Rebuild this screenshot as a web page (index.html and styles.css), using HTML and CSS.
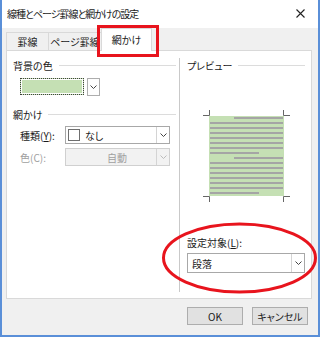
FILE: index.html
```html
<!DOCTYPE html>
<html lang="ja">
<head>
    <meta charset="UTF-8">
    <title>線種とページ罫線と網かけの設定</title>
    <link rel="stylesheet" href="styles.css">
</head>
<body>
    <div class="window">
        <div class="titlebar">
            <span class="title">線種とページ罫線と網かけの設定</span>
            <svg class="close" width="9" height="9" viewBox="0 0 9 9">
                <path d="M0.5 0.5 L8.5 8.5 M8.5 0.5 L0.5 8.5" stroke="#222" stroke-width="1.1" fill="none"/>
            </svg>
        </div>
        <div class="tabs">
            <div class="tab tab-1">罫線</div>
            <div class="tab tab-2">ページ罫線</div>
            <div class="tab tab-3 active">網かけ</div>
        </div>
        <div class="panel">
            <div class="col-left">
                <div class="group-label"><span>背景の色</span><span class="rule"></span></div>
                <div class="color-combo">
                    <span class="swatch"></span>
                    <span class="arrow-btn">
                        <svg width="7" height="4" viewBox="0 0 7 4"><path d="M0.5 0.5 L3.5 3.5 L6.5 0.5" stroke="#444" fill="none"/></svg>
                    </span>
                </div>
                <div class="group-label gap"><span>網かけ</span><span class="rule"></span></div>
                <div class="field-row">
                    <span class="field-label">種類(<u>Y</u>):</span>
                    <div class="combo">
                        <span class="check"></span>
                        <span class="combo-text">なし</span>
                        <span class="combo-arrow">
                            <svg width="7" height="4" viewBox="0 0 7 4"><path d="M0.5 0.5 L3.5 3.5 L6.5 0.5" stroke="#444" fill="none"/></svg>
                        </span>
                    </div>
                </div>
                <div class="field-row second">
                    <span class="field-label disabled">色(C):</span>
                    <div class="combo disabled">
                        <span class="combo-text center">自動</span>
                        <span class="combo-arrow">
                            <svg width="7" height="4" viewBox="0 0 7 4"><path d="M0.5 0.5 L3.5 3.5 L6.5 0.5" stroke="#bbb" fill="none"/></svg>
                        </span>
                    </div>
                </div>
            </div>
            <div class="divider"></div>
            <div class="col-right">
                <div class="group-label"><span>プレビュー</span><span class="rule"></span></div>
                <svg class="preview" width="87" height="92" viewBox="0 0 87 92">
                    <rect x="6" y="6" width="75" height="80" fill="#c5e0b4"/>
                    <g fill="#a5a5a5">
                        <rect x="31" y="7" width="49" height="2"/>
                        <rect x="7" y="12" width="73" height="2"/>
                        <rect x="7" y="17" width="73" height="2"/>
                        <rect x="7" y="22" width="73" height="2"/>
                        <rect x="7" y="27" width="73" height="2"/>
                        <rect x="7" y="32" width="73" height="2"/>
                        <rect x="7" y="37" width="73" height="2"/>
                        <rect x="7" y="42" width="49" height="2"/>
                        <rect x="31" y="47" width="49" height="2"/>
                        <rect x="7" y="52" width="73" height="2"/>
                        <rect x="7" y="57" width="73" height="2"/>
                        <rect x="7" y="62" width="73" height="2"/>
                        <rect x="7" y="67" width="73" height="2"/>
                        <rect x="7" y="72" width="73" height="2"/>
                        <rect x="7" y="77" width="73" height="2"/>
                        <rect x="7" y="82" width="49" height="2"/>
                    </g>
                    <path d="M0 5.5 H6.5 V0 M80.5 0 V5.5 H87 M0 86.5 H6.5 V92 M87 86.5 H80.5 V92" stroke="#666" fill="none"/>
                </svg>
                <div class="apply-label">設定対象(<u>L</u>):</div>
                <div class="combo wide">
                    <span class="combo-text">段落</span>
                    <span class="combo-arrow">
                        <svg width="7" height="4" viewBox="0 0 7 4"><path d="M0.5 0.5 L3.5 3.5 L6.5 0.5" stroke="#444" fill="none"/></svg>
                    </span>
                </div>
            </div>
        </div>
        <div class="footer">
            <button class="button">OK</button>
            <button class="button">キャンセル</button>
        </div>
    </div>

    <!-- red annotations drawn over the dialog -->
    <div class="mark-rect"></div>
    <svg class="mark-ellipse" width="157" height="72" viewBox="0 0 157 72">
        <ellipse cx="78.5" cy="36" rx="76" ry="34" stroke="#e8141d" stroke-width="3" fill="none"/>
    </svg>
</body>
</html>
```

FILE: styles.css
```css
body {
    margin: 0;
    font-family: "Noto Sans CJK JP", "Noto Sans", sans-serif;
    font-size: 10px;
    font-feature-settings: "palt";
    color: #1a1a1a;
}
.window {
    width: 320px;
    height: 337px;
    box-sizing: border-box;
    background-color: #f0f0f0;
    border-left: 2px solid #5a8fd8;
    border-right: 2px solid #5a8fd8;
    border-bottom: 2px solid #5a8fd8;
}
.titlebar {
    height: 28px;
    background-color: #fff;
    display: flex;
    align-items: center;
    justify-content: space-between;
    padding: 0 13px 0 5px;
}
.title {
    font-size: 10px;
    letter-spacing: -1px;
    margin-top: -1px;
}
.close {
    display: block;
    margin-top: -1px;
}
.tabs {
    height: 22px;
    display: flex;
    align-items: flex-end;
    padding-left: 4px;
}
.tab {
    height: 18px;
    box-sizing: border-box;
    border: 1px solid #d9d9d9;
    border-bottom: none;
    border-right: none;
    display: flex;
    align-items: center;
    justify-content: center;
    background-color: #f0f0f0;
}
.tab-1 {
    width: 42px;
}
.tab-2 {
    width: 53px;
}
.tab-3 {
    width: 51px;
}
.tab.active {
    height: 23px;
    margin-bottom: -1px;
    background-color: #fff;
    border-right: 1px solid #d9d9d9;
    position: relative;
    z-index: 1;
    padding-bottom: 2px;
}
.panel {
    margin-left: 4px;
    width: 306px;
    height: 249px;
    box-sizing: border-box;
    background-color: #fff;
    border: 1px solid #d9d9d9;
    display: flex;
}
.col-left {
    width: 172px;
    box-sizing: border-box;
    padding: 7px 3px 0 6px;
}
.divider {
    width: 1px;
    background-color: #c9c9c9;
    margin: 7px 0 6px;
}
.col-right {
    flex: 1;
    padding: 7px 6px 0 7px;
}
.group-label {
    height: 14px;
    display: flex;
    align-items: center;
}
.group-label.gap {
    margin-top: 11px;
}
.rule {
    flex: 1;
    height: 1px;
    background-color: #dcdcdc;
    margin-left: 6px;
}
.color-combo {
    margin: 6px 0 0 7px;
    display: flex;
}
.swatch {
    width: 64px;
    height: 17px;
    box-sizing: border-box;
    border: 1px dotted #404040;
    background-color: #c5e0b4;
    box-shadow: inset 0 0 0 1px #fff;
}
.arrow-btn {
    width: 13px;
    height: 18px;
    margin-left: 3px;
    box-sizing: border-box;
    border: 1px solid #adadad;
    background-color: #fdfdfd;
    display: flex;
    align-items: center;
    justify-content: center;
}
.field-row {
    margin: 5px 0 0 7px;
    display: flex;
    align-items: center;
}
.field-row.second {
    margin-top: 4px;
}
.field-label {
    width: 45px;
}
.disabled {
    color: #a0a0a0;
}
.combo {
    width: 105px;
    height: 18px;
    box-sizing: border-box;
    border: 1px solid #a8a8a8;
    background-color: #fff;
    display: flex;
    align-items: center;
}
.combo.disabled {
    background-color: #f2f2f2;
    border-color: #d0d0d0;
}
.combo.wide {
    width: 118px;
    height: 20px;
    margin-top: 3px;
}
.check {
    width: 12px;
    height: 12px;
    box-sizing: border-box;
    border: 1px solid #6f6f6f;
    margin-left: 2px;
}
.combo-text {
    flex: 1;
    padding-left: 5px;
}
.combo-text.center {
    text-align: center;
    padding-left: 12px;
}
.combo.wide .combo-text {
    padding-left: 4px;
}
.combo-arrow {
    width: 13px;
    height: 100%;
    box-sizing: border-box;
    border-left: 1px solid #d4d4d4;
    display: flex;
    align-items: center;
    justify-content: center;
}
.preview {
    display: block;
    margin: 38px 0 0 16px;
}
.apply-label {
    margin-top: 34px;
    height: 14px;
    line-height: 14px;
}
.footer {
    display: flex;
    justify-content: flex-end;
    gap: 9px;
    padding: 8px 10px 0 0;
}
.button {
    width: 56px;
    height: 18px;
    padding: 0;
    font-family: inherit;
    font-size: 10px;
    font-feature-settings: "palt";
    color: #1a1a1a;
    background-color: #e1e1e1;
    border: 1px solid #adadad;
}
.mark-rect {
    position: absolute;
    left: 97px;
    top: 25px;
    width: 62px;
    height: 32px;
    box-sizing: border-box;
    border: 3px solid #e8141d;
}
.mark-ellipse {
    position: absolute;
    left: 161px;
    top: 222px;
}
```
